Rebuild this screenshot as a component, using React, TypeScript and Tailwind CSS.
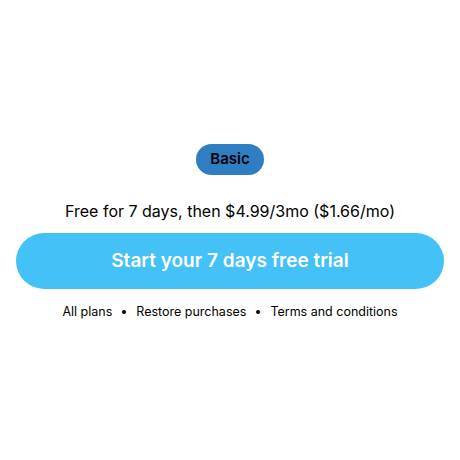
export default function App() {
  return (
    <div
      className="w-[460px] h-[460px] bg-white flex flex-col items-center pt-[144px]"
      style={{ fontFamily: "Inter, 'Noto Sans', sans-serif" }}
    >
      <div className="h-[31px] w-[68px] rounded-full bg-[#2f7ec3] flex items-center justify-center text-[15px] font-semibold text-black">
        Basic
      </div>
      <div className="mt-[26px] text-[16px] leading-[20px] text-black">
        Free for 7 days, then $4.99/3mo ($1.66/mo)
      </div>
      <button className="mt-[12px] w-[428px] h-[56px] rounded-full bg-[#44c1f6] text-white text-[19px] font-semibold">
        Start your 7 days free trial
      </button>
      <div className="mt-[15px] flex items-center gap-[10px] text-[12.5px] leading-[16px] text-black">
        <span>All plans</span>
        <span className="w-[4px] h-[4px] rounded-full bg-black" />
        <span>Restore purchases</span>
        <span className="w-[4px] h-[4px] rounded-full bg-black" />
        <span>Terms and conditions</span>
      </div>
    </div>
  );
}
